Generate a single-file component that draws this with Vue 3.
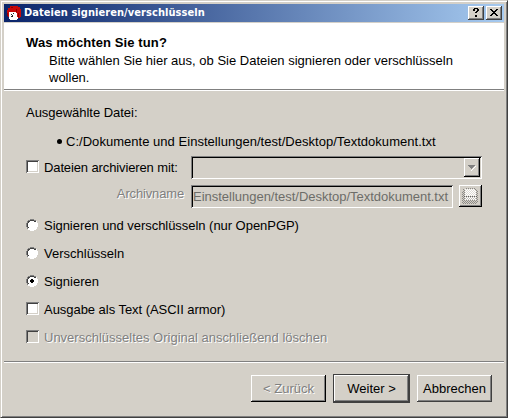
<script setup>
import { ref } from 'vue'

const mode = ref('sign')
const modes = [
  { id: 'both', label: 'Signieren und verschlüsseln (nur OpenPGP)', cls: 't-both' },
  { id: 'encrypt', label: 'Verschlüsseln', cls: 't-encrypt' },
  { id: 'sign', label: 'Signieren', cls: 't-sign' },
]
</script>

<template>
  <div class="window">
    <header class="titlebar">
      <svg class="app-icon" width="16" height="16" viewBox="0 0 16 16" shape-rendering="crispEdges">
        <path fill="#c80808" d="M4 1h8v1h2v2h1v8h-1v1h-3v-1H2v-1H1V5h1V3h2z" />
        <path fill="#8c0000" d="M1 8h1v3H1zM12 8h1v4h-1zM5 2h2v1H5zM10 4h1v3h-1z" />
        <path fill="#fff" d="M3 7h7v1h1v4h1v2h-1v1H4v-1H3z" />
        <path fill="#222" d="M7 8h1v1H7zM5 9h1v1H5zM5 11h2v1H5zM6 10h1v1H6z" />
      </svg>
      <span class="title">Dateien signieren/verschlüsseln</span>
      <span class="caption-btn">
        <svg width="16" height="14" shape-rendering="crispEdges"><path d="M5 3h1V2h4v1h1v2h-1v1H9v1H7V6h1V5h1V3H7v2H5zM7 9h2v2H7z" /></svg>
      </span>
      <span class="caption-btn">
        <svg width="16" height="14" shape-rendering="crispEdges"><path d="M4 3h2v1h1v1h2V4h1V3h2v1h-1v1h-1v1H9v1h1v1h1v1h1v1h-2V9H9V8H7v1H6v1H4V9h1V8h1V7h1V6H6V5H5V4H4z" /></svg>
      </span>
    </header>

    <section class="intro">
      <h1>Was möchten Sie tun?</h1>
      <p>Bitte wählen Sie hier aus, ob Sie Dateien signieren oder verschlüsseln<br />wollen.</p>
    </section>

    <main class="content">
      <div class="label"><span class="t-selected">Ausgewählte Datei:</span></div>
      <div class="file"><i class="bullet"></i><span class="t-file">C:/Dokumente und Einstellungen/test/Desktop/Textdokument.txt</span></div>

      <div class="archive">
        <div class="option archive-check"><i class="check"></i><span class="t-archive">Dateien archivieren mit:</span></div>
        <div class="combo">
          <span class="drop">
            <svg width="11" height="8" shape-rendering="crispEdges">
              <path fill="#fff" d="M8 2h1v1H8v1H7v1H6v1H5v1H4V6h1V5h1V4h1V3h1z" />
              <path fill="#808080" d="M1 1h7v1H7v1H6v1H5v1H4V4H3V3H2V2H1z" />
            </svg>
          </span>
        </div>
        <div class="archive-name disabled"><span class="t-name">Archivname</span></div>
        <div class="name-row">
          <div class="edit"><span class="t-edit">Einstellungen/test/Desktop/Textdokument.txt</span></div>
          <div class="browse">
            <svg width="17" height="17" viewBox="0 0 17 17" shape-rendering="crispEdges">
              <defs>
                <pattern id="grey" width="2" height="2" patternUnits="userSpaceOnUse">
                  <path fill="#8c8a86" d="M0 0h1v1H0zM1 1h1v1H1z" />
                </pattern>
                <pattern id="light" width="2" height="2" patternUnits="userSpaceOnUse">
                  <path fill="#fff" d="M0 0h1v1H0zM1 1h1v1H1z" />
                </pattern>
              </defs>
              <path fill="url(#grey)" d="M3 0h11v1h1v2h1v12h-1v1H1v-1H0V3h1V1h2z" />
              <path fill="#dedbd4" d="M3 1h10v1h1v6H3z" />
              <path fill="url(#light)" d="M3 1h10v1h1v6H3z" />
              <path fill="#c4c1ba" d="M3 9h11v3H3z" />
              <path fill="url(#light)" d="M3 9h11v3H3z" />
              <path fill="#606060" d="M2 8h1v1H2zM4 8h1v1H4zM6 8h1v1H6zM8 8h1v1H8zM10 8h1v1h-1zM12 8h1v1h-1zM14 8h1v1h-1z" />
            </svg>
          </div>
        </div>
      </div>

      <div class="options">
        <div v-for="m in modes" :key="m.id" class="option" @click="mode = m.id">
          <svg class="radio" width="12" height="12" viewBox="0 0 12 12" shape-rendering="crispEdges">
            <path fill="#fff" d="M4 1h4v1h2v2h1v4h-1v2H8v1H4v-1H2V8H1V4h1V2h2z" />
            <path fill="#808080" d="M4 0h4v1H4zM2 1h2v1H2zM8 1h2v1H8zM1 2h1v2H1zM0 4h1v4H0zM1 8h1v2H1z" />
            <path fill="#404040" d="M4 1h4v1H4zM2 2h2v1H2zM8 2h2v1H8zM2 3h1v1H2zM1 4h1v4H1zM2 8h1v1H2z" />
            <path fill="#fff" d="M10 2h1v2h-1zM11 4h1v4h-1zM10 8h1v2h-1zM8 10h2v1H8zM2 10h2v1H2zM4 11h4v1H4z" />
            <path v-if="mode === m.id" fill="#000" d="M5 4h2v1h1v2H7v1H5V7H4V5h1z" />
          </svg>
          <span :class="m.cls">{{ m.label }}</span>
        </div>
        <div class="option"><i class="check"></i><span class="t-armor">Ausgabe als Text (ASCII armor)</span></div>
        <div class="option disabled"><i class="check off"></i><span class="t-delete">Unverschlüsseltes Original anschließend löschen</span></div>
      </div>
    </main>

    <footer class="footer">
      <div class="btn back disabled"><span class="t-back">&lt; Zurück</span></div>
      <div class="btn default"><span class="t-next">Weiter &gt;</span></div>
      <div class="btn"><span class="t-cancel">Abbrechen</span></div>
    </footer>
  </div>
</template>

<style>
body { background: #d4d0c8; overflow: hidden; }
</style>

<style scoped>
.window {
  box-sizing: border-box;
  width: 508px;
  height: 418px;
  padding: 3px;
  border: 1px solid;
  border-color: #d4d0c8 #404040 #404040 #d4d0c8;
  box-shadow: inset 1px 1px #fff, inset -1px -1px #808080;
  background: #d4d0c8;
  color: #000;
  font: 13px/17px "Liberation Sans", Arial, sans-serif;
  white-space: nowrap;
  cursor: default;
}
svg { display: block; flex: none; }
.titlebar {
  display: flex;
  align-items: center;
  box-sizing: border-box;
  height: 18px;
  padding: 0 2px;
  background: linear-gradient(90deg, #0a246a, #a6caf0);
  color: #fff;
}
.title {
  flex: 1;
  margin-left: 2px;
  font: bold 11px/18px "DejaVu Sans Condensed", "DejaVu Sans", sans-serif;
  letter-spacing: 0.06px;
}
.caption-btn {
  box-sizing: border-box;
  width: 16px;
  height: 14px;
  margin-left: 2px;
  background: #d4d0c8;
  box-shadow: inset -1px -1px #404040, inset 1px 1px #fff, inset -2px -2px #808080;
}
.intro {
  box-sizing: border-box;
  height: 68px;
  margin-top: 1px;
  padding: 11px 22px 0;
  background: #fff;
  border-bottom: 1px solid #fff;
  box-shadow: inset 0 -1px #808080;
}
h1 { margin: 0; font-size: 13px; line-height: 17px; letter-spacing: 0.1px; }
p { margin: 1px 0 0 23px; }
.content {
  box-sizing: border-box;
  height: 270px;
  padding: 13px 22px 0;
}
.label { height: 29px; }
.file { display: flex; align-items: center; height: 17px; padding-left: 31px; }
.bullet { width: 5px; height: 5px; margin-right: 4px; border-radius: 50%; background: #000; }
.archive {
  display: grid;
  grid-template-columns: 165px 291px;
  row-gap: 6px;
  margin-top: 6px;
}
.option { display: flex; align-items: center; height: 17px; }
.archive-check { margin-top: 3px; }
.check {
  box-sizing: border-box;
  width: 13px;
  height: 13px;
  margin: -2px 5px 0 0;
  background: #fff;
  box-shadow: inset 1px 1px #808080, inset -1px -1px #fff, inset 2px 2px #404040, inset -2px -2px #d4d0c8;
}
.check.off { background: #d4d0c8; }
.radio { margin: -1px 6px 0 0; }
.combo, .edit {
  box-sizing: border-box;
  height: 23px;
  box-shadow: inset 1px 1px #808080, inset -1px -1px #fff, inset 2px 2px #000;
}
.combo { display: flex; justify-content: flex-end; padding: 2px; }
.drop {
  display: grid;
  place-content: center;
  width: 16px;
  height: 19px;
  box-shadow: inset -1px -1px #000, inset 1px 1px #fff, inset -2px -2px #808080;
}
.disabled { color: #808080; text-shadow: 1px 1px #fff; }
.archive-name { text-align: right; padding-right: 7px; }
.name-row { display: flex; justify-content: space-between; }
.edit {
  display: flex;
  justify-content: flex-end;
  width: 262px;
  padding: 3px 5px 0 2px;
  overflow: hidden;
  color: #6d6d69;
}
.browse {
  box-sizing: border-box;
  display: grid;
  place-content: center;
  width: 23px;
  height: 22px;
  box-shadow: inset -1px -1px #000, inset 1px 1px #fff, inset -2px -2px #808080;
}
.options { display: grid; row-gap: 11px; margin-top: 9px; }
.t-selected { letter-spacing: -0.03px; }
.t-archive { letter-spacing: -0.12px; }
.t-file { letter-spacing: 0.03px; }
.t-name { letter-spacing: -0.15px; }
.t-edit { letter-spacing: -0.02px; }
.t-both, .t-armor { letter-spacing: -0.04px; }
.footer {
  display: flex;
  justify-content: flex-end;
  gap: 7px;
  padding: 12px 12px 0 0;
  border-top: 1px solid #808080;
  box-shadow: inset 0 1px #fff;
}
.btn {
  box-sizing: border-box;
  width: 75px;
  height: 27px;
  margin-top: 1px;
  padding-top: 5px;
  text-align: center;
  box-shadow: inset -1px -1px #404040, inset 1px 1px #fff, inset -2px -2px #808080;
}
.btn.back { box-shadow: inset -1px -1px #000, inset 1px 1px #fff, inset -2px -2px #808080; }
.btn.default {
  width: 77px;
  height: 29px;
  margin: 0;
  border: 1px solid #404040;
}
</style>
